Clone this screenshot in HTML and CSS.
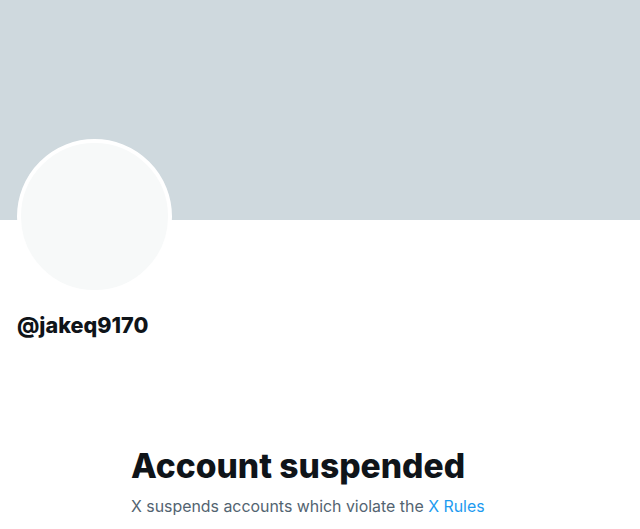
FILE: index.html
```html
<!DOCTYPE html>
<html>
<head>
<meta charset="utf-8">
<link rel="stylesheet" href="styles.css">
</head>
<body>
<div class="banner"></div>
<div class="profile">
  <div class="avatar"></div>
  <div class="handle">@jakeq9170</div>
</div>
<div class="empty">
  <h1 class="title">Account suspended</h1>
  <p class="desc">X suspends accounts which violate the <a href="#" class="link">X Rules</a></p>
</div>
</body>
</html>
```
FILE: styles.css
```css
html, body {
  margin: 0;
  padding: 0;
  background: #ffffff;
  font-family: Inter, "Liberation Sans", sans-serif;
}
.banner {
  height: 220px;
  background: #cfd9de;
}
.profile {
  padding: 0 17px;
  display: flex;
  flex-direction: column;
  align-items: flex-start;
}
.avatar {
  width: 147px;
  height: 147px;
  border-radius: 50%;
  background: #f7f9f9;
  border: 4px solid #ffffff;
  margin-top: -81px;
}
.handle {
  margin-top: 19px;
  font-size: 21.6px;
  font-weight: 800;
  color: #0f1419;
  line-height: 24px;
}
.empty {
  padding: 0 0 0 131px;
  margin-top: 109px;
}
.title {
  margin: 0;
  font-size: 33.6px;
  font-weight: 800;
  color: #0f1419;
  line-height: 40px;
}
.desc {
  margin: 11px 0 0;
  font-size: 15.9px;
  color: #536471;
  line-height: 20px;
}
.link {
  color: #1d9bf0;
  text-decoration: none;
}
```
